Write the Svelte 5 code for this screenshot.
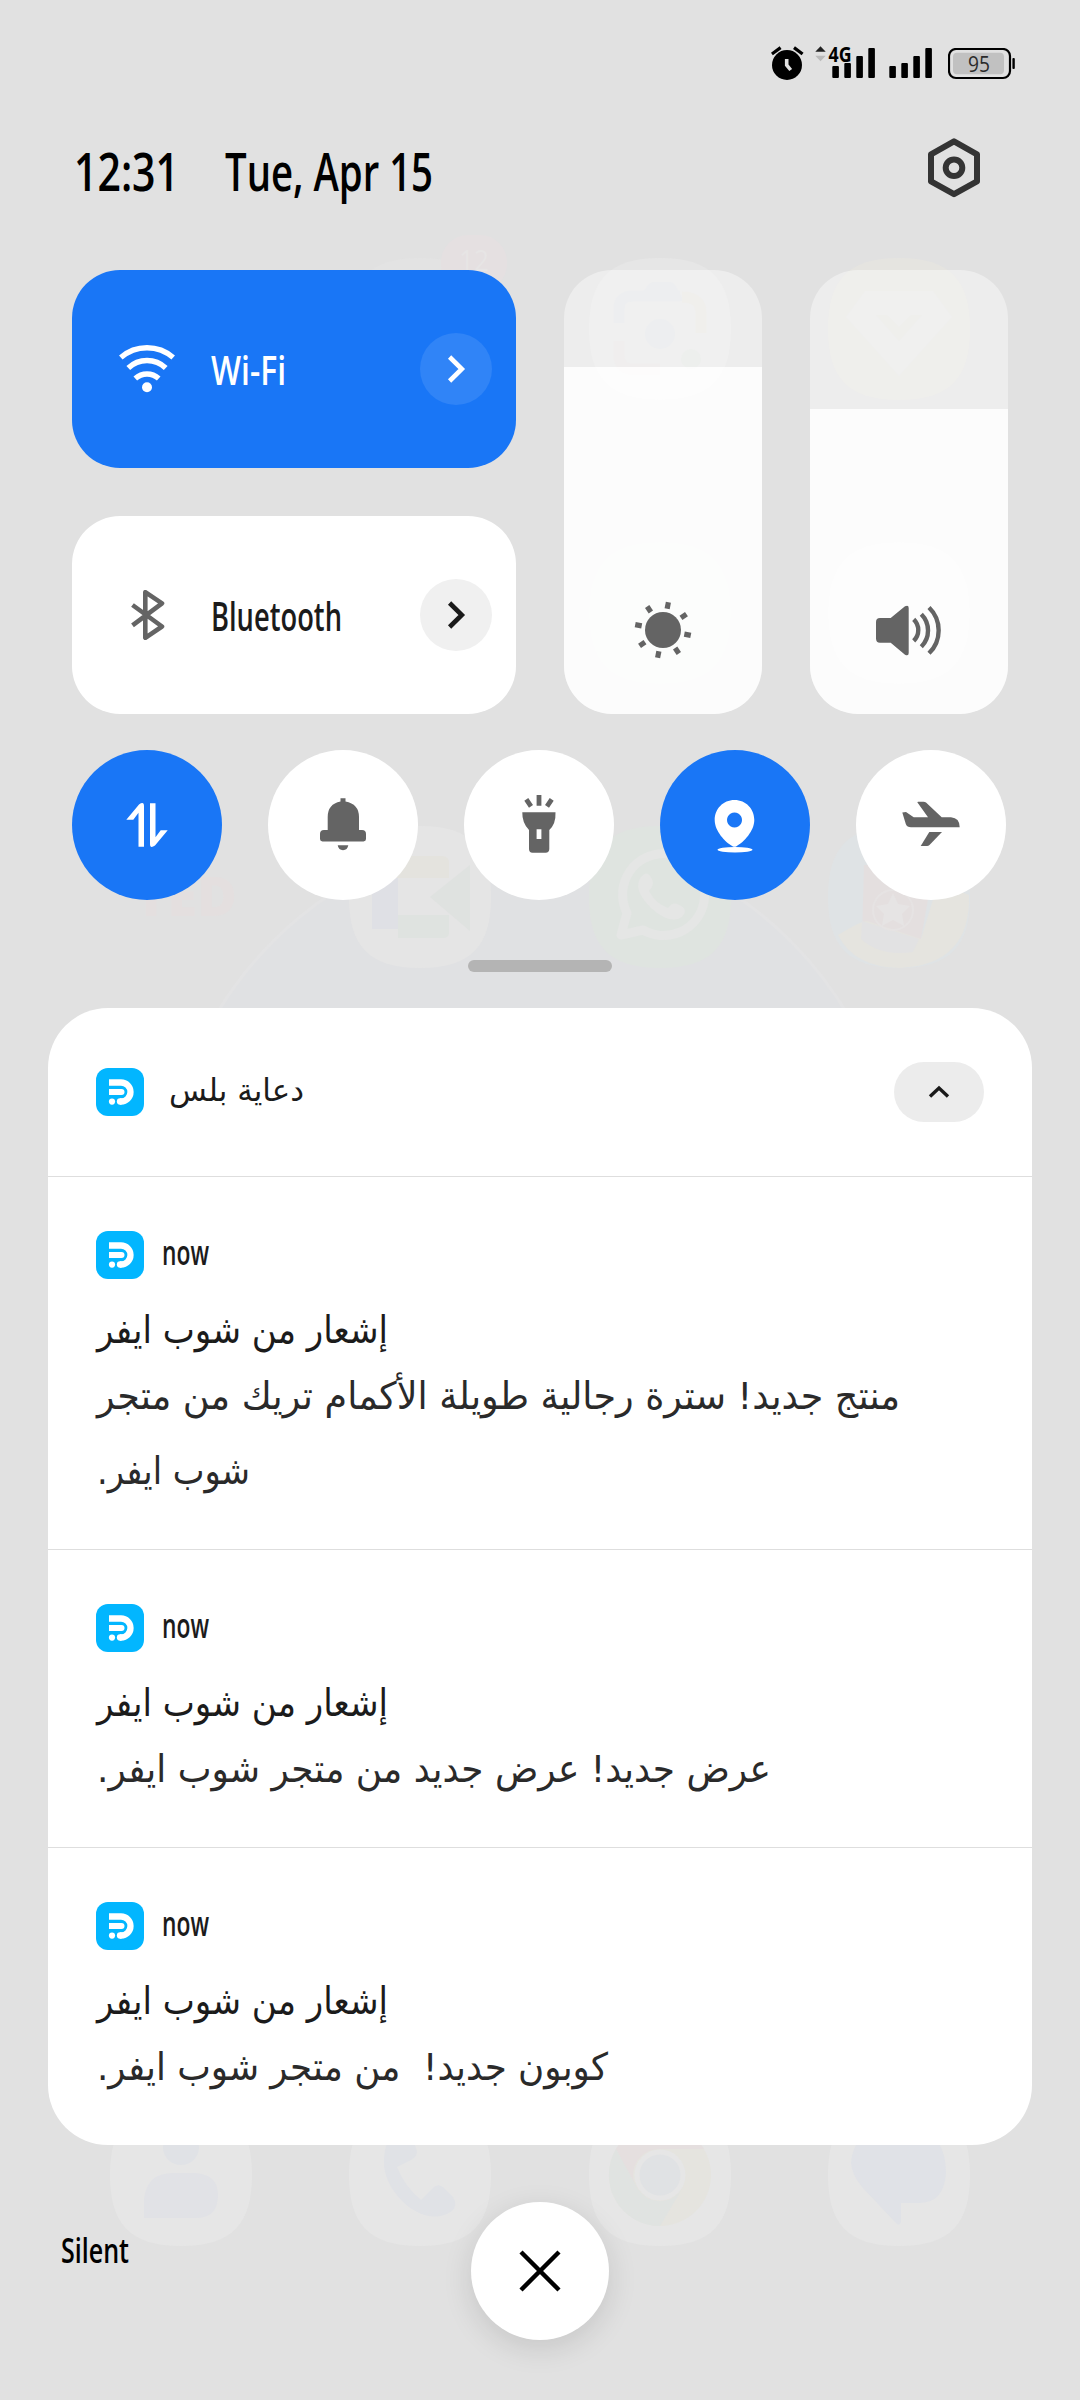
<script>
  let tiles = [
    { name: "Wi-Fi", icon: "wifi", width: 75, active: true },
    { name: "Bluetooth", icon: "bluetooth", width: 131, active: false },
  ];

  let sliders = [
    { icon: "brightness", level: 347 },
    { icon: "volume", level: 305 },
  ];

  let toggles = [
    { icon: "data", active: true },
    { icon: "bell", active: false },
    { icon: "torch", active: false },
    { icon: "location", active: true },
    { icon: "plane", active: false },
  ];

  let notifications = [
    {
      title: "إشعار من شوب ايفر",
      lines: [
        { text: "منتج جديد! سترة رجالية طويلة الأكمام تريك من متجر", width: 803 },
        { text: "شوب ايفر.", width: 153 },
      ],
    },
    {
      title: "إشعار من شوب ايفر",
      lines: [{ text: "عرض جديد! عرض جديد من متجر شوب ايفر.", width: 674 }],
    },
    {
      title: "إشعار من شوب ايفر",
      lines: [{ text: "كوبون جديد!\u00a0 من متجر شوب ايفر.", width: 511 }],
    },
  ];

  const rays = [11, 56, 101, 146, 191, 236, 281, 326];
  const squircle =
    "M0-71C52-71 71-48 71 0S52 71 0 71-71 48-71 0-52-71 0-71Z";
</script>

<!-- the baseline sits on the bottom edge of the box -->
{#snippet label(text, width, size, cls)}
  <svg class="label {cls}" {width} height="30">
    <text y="30" font-size={size} textLength={width} lengthAdjust="spacingAndGlyphs">{text}</text>
  </svg>
{/snippet}

{#snippet arabic(text, width, size, cls)}
  <svg class="label arabic {cls}" {width} height="30">
    <text
      x={width + 1}
      y="31"
      direction="rtl"
      font-size={size}
      textLength={width}
      lengthAdjust="spacingAndGlyphs">{text}</text
    >
  </svg>
{/snippet}

{#snippet appIcon()}
  <svg class="app-icon" width="48" height="48" viewBox="0 0 48 48">
    <rect width="48" height="48" rx="12" fill="#02b6ff" />
    <path d="M13 14.5H25a9.5 9.5 0 0 1 0 19H24" fill="none" stroke="#fff" stroke-width="6.3" />
    <path d="M13 21H25.5a3 3 0 0 1 0 6H13Z" fill="#fff" />
    <circle cx="24" cy="33.5" r="3.15" fill="#fff" />
    <circle cx="16" cy="33.6" r="3.1" fill="#fff" />
  </svg>
{/snippet}

<div class="screen">
  <svg class="wallpaper" width="1080" height="2400" viewBox="0 0 1080 2400">
    <circle cx="532" cy="1200" r="366" fill="#e0e1e3" stroke="#e3e3e4" stroke-width="3" />
    <path transform="translate(420 329)" d={squircle} fill="#e3e3e3" />
    <rect x="441" y="235" width="66" height="56" rx="27" fill="#e5e0e1" />
    <text x="459" y="271" font-size="30" textLength="30" lengthAdjust="spacingAndGlyphs" fill="#e7e5e5">12</text>

    <g transform="translate(660 329)">
      <path d={squircle} fill="#e6e6e6" />
      <path d="M-41-6V-20Q-41-33-27-33H20" fill="none" stroke="#e1e3e6" stroke-width="11" />
      <path d="M-17-37L-11-45Q-9-47-6-47H9Q13-47 15-44L24-28H-17Z" fill="#e1e3e6" />
      <path d="M22-32Q41-32 41-16V4" fill="none" stroke="#e6e5e0" stroke-width="11" />
      <path d="M-41 12V26Q-41 40-26 40H0" fill="none" stroke="#e6e3e3" stroke-width="11" />
      <circle r="15" cy="5" fill="#e1e3e6" />
      <circle cx="31" cy="30" r="10" fill="#e1e5e1" />
    </g>
    <g transform="translate(899 329)">
      <path d={squircle} fill="#e5e4e0" />
      <path d="M-34-38H34L53-12 0 47-53-12Z" fill="#e6e6e5" />
      <path d="M-23-14H-12L0-2 12-14H23L0 12Z" fill="#e5e4e0" />
    </g>
    <path transform="translate(660 613)" d={squircle} fill="#dfe6e2" />
    <path transform="translate(899 613)" d={squircle} fill="#e6e6e6" />

    <text x="135" y="916" font-size="54" font-weight="800" textLength="102" lengthAdjust="spacingAndGlyphs" fill="#e4dfdf">TED</text>
    <g transform="translate(420 897)">
      <path d={squircle} fill="#e5e5e5" />
      <path d="M-48-28H-22V32H-48Z" fill="#dfe0e5" />
      <path d="M-26-41H22Q29-41 29-34V-19H-26Z" fill="#e4e3de" />
      <path d="M-22 18H29V36Q29 41 22 41H-22Z" fill="#dfe3e0" />
      <path d="M10 0L50-32V34Z" fill="#dfe2e0" />
    </g>
    <g transform="translate(660 897)">
      <path d={squircle} fill="#dfe4e0" />
      <path
        d="M-39 38L-33 16A41 41 0 1 1-17 33Z"
        fill="none"
        stroke="#e5e6e5"
        stroke-width="9"
        stroke-linejoin="round"
      />
      <path d="M-19-20Q-13-28-8-18-5-12-11-6-4 7 8 11 13 4 19 8 29 12 22 20 10 28-9 11-28-8-19-20Z" fill="#e5e6e5" />
    </g>
    <g transform="translate(899 897)">
      <path d={squircle} fill="#dfe3e5" />
      <path d="M-35-32H35L22 42H-37Z" fill="#e4dfdf" />
      <path d="M-61 38Q-38 24-32 24L22 42 39-14 70-2Q72 68 0 71-45 70-61 38Z" fill="#e5e4df" />
      <path d="M-37 24L20 42 14 55Q-18 60-38 42Z" fill="#e2e2e3" />
      <circle cx="-6" cy="13" r="20" fill="none" stroke="#e6e3e3" stroke-width="2" />
      <path d="M-6-4L-1 7 11 9 3 17 5 29-6 23-17 29-15 17-23 9-11 7Z" fill="#e6e4e4" />
    </g>

    <g transform="translate(181 2175)">
      <path d={squircle} fill="#e6e6e6" />
      <circle cy="-28" r="18" fill="#e0e2e6" />
      <path d="M-37 43V24Q-34-2-8-2H15Q37 0 37 20 37 43 15 43Z" fill="#e1e2e6" />
    </g>
    <g transform="translate(420 2175)">
      <path d={squircle} fill="#e6e6e6" />
      <path
        d="M-36-12C-36-38-25-46-10-44L-3-24Q-3-18-9-15L-23-8Q-15 12 1 25L14 12Q19 8 24 13L33 22Q38 30 32 36C4 56-36 18-36-12Z"
        fill="#e0e2e6"
      />
    </g>
    <g transform="translate(660 2175)">
      <path d={squircle} fill="#e6e6e6" />
      <circle r="51" fill="#e5e4df" />
      <path d="M-44-26A51 51 0 0 1 44-26H0A26 26 0 0 0-24 12Z" fill="#e5dfdf" />
      <path d="M-44-26A51 51 0 0 0 0 51L22 14A26 26 0 0 1-22 14Z" fill="#e0e3e1" />
      <circle r="23" fill="#e0e2e4" stroke="#e6e6e6" stroke-width="5" />
    </g>
    <g transform="translate(899 2175)">
      <path d={squircle} fill="#e6e6e6" />
      <path d="M-48-12Q-46-44-10-44H20Q47-38 47-2 45 28 20 28H2V46Q1 52-3 48L-37 12Q-47 0-48-12Z" fill="#e0e2e7" />
    </g>
  </svg>

  <div class="status-bar">
    <svg width="33" height="35" viewBox="0 0 33 35">
      <circle cx="16" cy="19" r="15" />
      <path d="M.9 8L9.6 1.6M23 1.6L31.6 8" stroke="#000" stroke-width="3.2" />
      <path d="M15.7 13v6l4 5" fill="none" stroke="#e1e1e1" stroke-width="3.6" />
    </svg>
    <svg class="signal" width="118" height="34" viewBox="0 0 118 34">
      <path d="M.3 6.8H10.7L5.5 1.3Z" fill="#222" />
      <path d="M.3 10.7H10.7L5.5 16.3Z" fill="#bbb" />
      <g>
        <rect x="17.3" y="21" width="6.6" height="12" rx="1" />
        <rect x="29.3" y="18" width="6.6" height="15" rx="1" />
        <rect x="41.3" y="11" width="6.6" height="22" rx="1" />
        <rect x="53.3" y="3" width="6.6" height="30" rx="1" />
        <rect x="74.3" y="21" width="6.6" height="12" rx="1" />
        <rect x="86.3" y="18" width="6.6" height="15" rx="1" />
        <rect x="98.3" y="11" width="6.6" height="22" rx="1" />
        <rect x="110.3" y="3" width="6.6" height="30" rx="1" />
      </g>
      <text x="13.5" y="16.5" font-size="21" font-weight="700" textLength="23" lengthAdjust="spacingAndGlyphs">4G</text>
    </svg>
    <svg width="68" height="32" viewBox="0 0 68 32">
      <rect x="1" y="1" width="61" height="29" rx="7" fill="none" stroke="#000" stroke-width="2.2" />
      <rect x="5" y="4.8" width="51" height="21.4" rx="4" fill="#c1c1c1" />
      <rect x="64.4" y="10" width="2.4" height="11" rx="1" />
      <text x="20" y="24.3" font-size="22.5" textLength="22" lengthAdjust="spacingAndGlyphs" fill="#2b2b2b">95</text>
    </svg>
  </div>

  <header>
    {@render label("12:31", 105, 52, "clock")}
    {@render label("Tue, Apr 15", 208, 52, "date")}
    <svg class="settings" width="54" height="60" viewBox="0 0 54 60">
      <path
        d="M27 3.4L50 16.3V43.4L27 56.2 4 43.4V16.3Z"
        fill="none"
        stroke="#343434"
        stroke-width="6"
        stroke-linejoin="round"
      />
      <circle cx="27" cy="29.8" r="8.3" fill="none" stroke="#343434" stroke-width="6" />
    </svg>
  </header>

  <section class="controls">
    <div class="tiles">
      {#each tiles as tile}
        <div class="tile" class:active={tile.active}>
          {#if tile.icon === "wifi"}
            <svg class="tile-icon" width="56" height="50" viewBox="0 -1 56 50">
              <g fill="none" stroke="currentColor" stroke-width="5.4">
                <path d="M1.8 12.5A40 40 0 0 1 54.2 12.5" />
                <path d="M9.3 23A27 27 0 0 1 46.7 23" />
                <path d="M16.3 33.5A17.5 17.5 0 0 1 39.7 33.5" />
              </g>
              <circle cx="28" cy="42.3" r="5" fill="currentColor" />
            </svg>
          {:else}
            <svg class="tile-icon" width="56" height="50" viewBox="0 0 56 50">
              <path
                d="M13.5 15L43 36.5 26.3 47.8V2.2L43 13.3 13.5 35.3"
                fill="none"
                stroke="currentColor"
                stroke-width="4.6"
                stroke-linejoin="round"
              />
            </svg>
          {/if}
          {@render label(tile.name, tile.width, 40, "tile-name")}
          <div class="more">
            <svg width="72" height="72" viewBox="0 0 72 72">
              <path d="M29.6 24L41.8 36 29.6 48" fill="none" stroke="currentColor" stroke-width="4.6" />
            </svg>
          </div>
        </div>
      {/each}
    </div>

    {#each sliders as slider}
      <div class="slider">
        <div class="level" style="height: {slider.level}px">
          {#if slider.icon === "brightness"}
            <svg width="60" height="60" viewBox="-30 -30 60 60" fill="#646464">
              <circle r="18" />
              {#each rays as angle}
                <rect x="-2.6" y="-28.3" width="5.2" height="6.6" transform="rotate({angle})" />
              {/each}
            </svg>
          {:else}
            <svg width="66" height="60" viewBox="0 -5 66 60">
              <path
                d="M4 13H14.7L29 1.2Q32.7-.5 32.7 3V48Q32.7 51.4 29 49.7L14.7 37.7H4Q0 37.7 0 33.5V17Q0 13 4 13Z"
                fill="#646464"
              />
              <g fill="none" stroke="#646464" stroke-width="4.4">
                <path d="M37.7 14.3A15 15 0 0 1 37.7 35.9" />
                <path d="M45.3 9.2A23 23 0 0 1 45.3 41.7" />
                <path d="M53 2.5A32 32 0 0 1 53 48.3" />
              </g>
            </svg>
          {/if}
        </div>
      </div>
    {/each}
  </section>

  <section class="toggles">
    {#each toggles as toggle}
      <div class="toggle" class:active={toggle.active}>
        <svg width="150" height="150" viewBox="0 0 150 150" fill="currentColor">
          {#if toggle.icon === "data"}
            <path d="M66.5 96.7V62.7L61.3 69.7H54.3L67 54.5Q72 51 72 56V96.7Z" />
            <path d="M66.5 96.7V62.7L61.3 69.7H54.3L67 54.5Q72 51 72 56V96.7Z" transform="rotate(180 75 75)" />
          {:else if toggle.icon === "bell"}
            <path
              d="M72.5 48.3H77.5V51.5Q91 54 91 67V80H94Q98 80 98 84V89Q98 91.4 95.5 91.4H54.5Q52 91.4 52 89V84Q52 80 56 80H59.7V67Q59.7 54 72.5 51.5Z"
            />
            <path d="M69.7 95.3H80.3Q79.5 100.2 75 100.2T69.7 95.3Z" />
          {:else if toggle.icon === "torch"}
            <path
              fill-rule="evenodd"
              d="M58.3 62.3H91.5Q92 74 85.3 80V99Q85.3 102.7 81.5 102.7H68.5Q65 102.7 65 99V80Q58 73 58.3 62.3ZM72.6 79.3V89H77.4V79.3Z"
            />
            <path d="M62.3 49.3L67 56.3M75 45V55.8M87.7 49.3L83 56.3" stroke="currentColor" stroke-width="4.8" />
          {:else if toggle.icon === "location"}
            <path
              fill-rule="evenodd"
              d="M74.5 50C86 50 94.3 59 94.3 70 94.3 81 84 92 76.5 96.2Q74.5 97.3 72.5 96.2C65 92 54.7 81 54.7 70 54.7 59 63 50 74.5 50ZM74.5 62.5a7.5 7.5 0 1 0 .01 0Z"
            />
            <ellipse cx="75" cy="99.7" rx="17.5" ry="2.8" />
          {:else}
            <path
              d="M46.3 62.5L50 62 57.7 67.3H72L61.3 52.3 62 51.7H67.5Q69 51.7 70 52.6L85.7 67.3H95Q103.7 68 103.7 77.3H55Q51 77.3 49.8 74Z"
            />
            <path d="M73.3 82H86L73.5 95Q72.5 96 71 96H64.7Z" />
          {/if}
        </svg>
      </div>
    {/each}
  </section>

  <div class="handle"></div>

  <section class="panel">
    <div class="group">
      {@render appIcon()}
      {@render arabic("دعاية بلس", 135, 31, "group-name")}
      <div class="collapse">
        <svg width="24" height="16" viewBox="0 0 24 16">
          <path d="M3 12.5L12 4 21 12.5" fill="none" stroke="#1a1a1a" stroke-width="3.4" />
        </svg>
      </div>
    </div>
    {#each notifications as item}
      <article>
        <div class="source">
          {@render appIcon()}
          {@render label("now", 47, 34, "when")}
        </div>
        {@render arabic(item.title, 291, 38, "title")}
        {#each item.lines as line}
          {@render arabic(line.text, line.width, 38, "line")}
        {/each}
      </article>
    {/each}
  </section>

  <footer>
    {@render label("Silent", 68, 34, "silent")}
    <div class="clear">
      <svg width="42" height="42" viewBox="0 0 42 42">
        <path d="M2 2L40 40M40 2L2 40" stroke="#000" stroke-width="4.4" />
      </svg>
    </div>
  </footer>
</div>

<style>
  :global(body) {
    margin: 0;
    background: #e1e1e1;
  }

  .screen {
    position: relative;
    display: flex;
    flex-direction: column;
    width: 1080px;
    height: 2400px;
    overflow: hidden;
    background: #e1e1e1;
    font-family: "Open Sans", "Noto Sans", sans-serif;
    isolation: isolate;
  }

  .screen svg {
    display: block;
    flex: none;
  }

  .wallpaper {
    position: absolute;
    top: 0;
    left: 0;
    z-index: -1;
  }

  .screen .label {
    overflow: visible;
    font-weight: 600;
    fill: #1b1b1b;
  }
  .screen .arabic {
    font-family: "DejaVu Sans", sans-serif;
    font-weight: 400;
  }

  .status-bar {
    display: flex;
    justify-content: flex-end;
    align-items: center;
    height: 35px;
    padding: 46px 64px 0 0;
  }
  .signal {
    margin: -3px 15px 0 11px;
    overflow: visible;
  }

  header {
    display: flex;
    align-items: center;
    height: 60px;
    padding: 57px 99px 0 74px;
  }
  .clock,
  .date {
    margin-top: 16px;
  }
  .screen .clock,
  .screen .date {
    fill: #000;
  }
  .date {
    margin-left: 46px;
  }
  .settings {
    margin-left: auto;
  }

  .controls {
    display: flex;
    gap: 48px;
    padding: 72px 72px 0;
  }
  .tiles {
    display: flex;
    flex-direction: column;
    gap: 48px;
  }
  .tile {
    display: flex;
    align-items: center;
    box-sizing: border-box;
    width: 444px;
    height: 198px;
    padding: 0 24px 0 47px;
    border-radius: 48px;
    background: #fff;
    color: #646464;
  }
  .tile.active {
    background: #1976f6;
    color: #fff;
  }
  .tile.active .label {
    fill: #fff;
  }
  .tile-name {
    margin: 2px 0 0 36px;
  }
  .more {
    margin-left: auto;
    border-radius: 50%;
    background: #f0f0f0;
    color: #1a1a1a;
  }
  .active .more {
    background: #3084f7;
    color: #fff;
  }

  .slider {
    display: flex;
    align-items: flex-end;
    width: 198px;
    height: 444px;
    overflow: hidden;
    border-radius: 48px;
    background: rgba(255, 255, 255, 0.4);
  }
  .level {
    display: flex;
    align-items: flex-end;
    justify-content: center;
    box-sizing: border-box;
    width: 100%;
    padding-bottom: 54px;
    background: rgba(255, 255, 255, 0.82);
  }

  .toggles {
    display: flex;
    gap: 46px;
    padding: 36px 72px 0;
  }
  .toggle {
    border-radius: 50%;
    background: #fff;
    color: #646464;
  }
  .toggle.active {
    background: #1976f6;
    color: #fff;
  }

  .handle {
    align-self: center;
    width: 144px;
    height: 12px;
    margin: 60px 0 36px;
    border-radius: 6px;
    background: #b4b4b4;
  }

  .panel {
    margin: 0 48px;
    border-radius: 60px;
    background: #fff;
  }
  .group {
    display: flex;
    align-items: center;
    height: 168px;
    padding: 0 48px;
  }
  .group-name {
    margin: -15px 0 0 24px;
  }
  .collapse {
    display: flex;
    align-items: center;
    justify-content: center;
    width: 90px;
    height: 60px;
    margin-left: auto;
    border-radius: 30px;
    background: #ececec;
  }
  article {
    padding: 54px 48px 66px;
    border-top: 1px solid #dedede;
  }
  .source {
    display: flex;
    align-items: flex-start;
  }
  .when {
    margin: 4px 0 0 18px;
  }
  .title {
    margin-top: 33px;
  }
  .line {
    margin-top: 36px;
  }
  .line + .line {
    margin-top: 45px;
  }
  .screen .line {
    fill: #2a2a2a;
  }

  footer {
    display: flex;
    align-items: center;
    padding: 57px 61px 0;
  }
  .silent {
    margin-top: -46px;
  }
  .screen .silent {
    fill: #000;
  }
  .clear {
    display: flex;
    align-items: center;
    justify-content: center;
    width: 138px;
    height: 138px;
    margin-left: 342px;
    border-radius: 50%;
    background: #fff;
    box-shadow: 0 8px 30px rgba(0, 0, 0, 0.12);
  }
</style>
